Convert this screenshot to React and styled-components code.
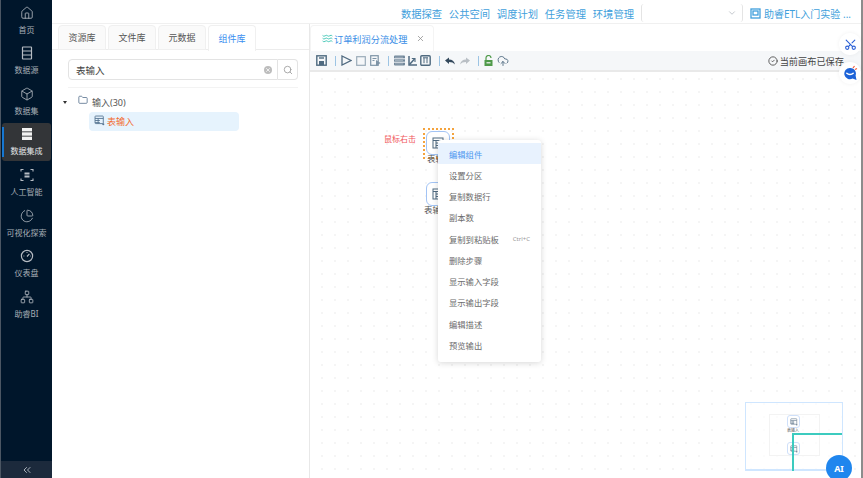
import React from 'react';
import styled, { createGlobalStyle } from 'styled-components';
import {
  Home, Box, ChartPie, Network, ChevronsLeft,
  Folder, X, Search, ChevronDown, CircleCheck, CloudUpload, Scissors, Waves,
} from 'lucide-react';

const GlobalStyle = createGlobalStyle`
  html, body { margin: 0; padding: 0; height: 100%; overflow: hidden; background: #fff; }
  body { font-family: "Noto Sans", "Noto Sans CJK SC", sans-serif; }
  #root { height: 100%; }
`;

const Page = styled.div`
  display: flex;
  width: 863px;
  height: 478px;
  overflow: hidden;
  position: relative;
`;

const Sidebar = styled.aside`
  width: 52px;
  flex: none;
  display: flex;
  flex-direction: column;
  background: #00162b;
  border-left: 1px solid #4b5663;
  box-sizing: border-box;
`;

const SideList = styled.nav`
  flex: 1;
  display: flex;
  flex-direction: column;
  gap: 2.6px;
  padding-top: 1.2px;
`;

const SideItem = styled.div`
  position: relative;
  height: 38px;
  flex: none;
  margin: 0 1px;
  display: flex;
  flex-direction: column;
  align-items: center;
  justify-content: center;
  gap: 5px;
  font-size: 8px;
  line-height: 10px;
  white-space: nowrap;
  color: ${p => (p.$active ? '#e6e8ea' : '#a7aeb6')};
  border-radius: 3px;
  background: ${p => (p.$active ? '#333538' : 'transparent')};
  svg { color: ${p => (p.$active ? '#f2f2f2' : '#b6bcc3')}; }
  ${p => p.$active && `
    &::before {
      content: '';
      position: absolute;
      left: 0;
      top: 4px;
      bottom: 4px;
      width: 2px;
      background: #1677d2;
    }
  `}
`;

const Collapse = styled.div`
  height: 17px;
  display: flex;
  align-items: center;
  justify-content: center;
  background: #1c2a3c;
  color: #aab2bb;
`;

const Main = styled.div`
  flex: 1;
  display: flex;
  flex-direction: column;
  min-width: 0;
`;

const TopBar = styled.header`
  height: 24px;
  flex: none;
  display: flex;
  align-items: center;
  justify-content: flex-end;
  box-sizing: border-box;
  padding: 3px 12px 0 0;
  background: #fff;
  border-bottom: 1px solid #f0f0f0;
`;

const TopLink = styled.span`
  font-size: 10.3px;
  color: #3f9fdc;
  margin-left: 6.8px;
  white-space: nowrap;
`;

const SelectBox = styled.div`
  width: 102px;
  height: 18px;
  margin-left: 7px;
  display: flex;
  align-items: center;
  justify-content: flex-end;
  padding-right: 5px;
  box-sizing: border-box;
  border-left: 1px solid #e4e4e4;
  border-right: 1px solid #e4e4e4;
  border-radius: 3px;
  color: #b9bec4;
`;

const Guide = styled.span`
  display: flex;
  align-items: center;
  gap: 3px;
  margin-left: 7px;
  font-size: 10px;
  color: #3f9fdc;
  white-space: nowrap;
`;

const Body = styled.div`
  flex: 1;
  display: flex;
  min-height: 0;
`;

const LeftPanel = styled.section`
  width: 258px;
  flex: none;
  display: flex;
  flex-direction: column;
  border-right: 1px solid #e8e8e8;
  box-sizing: border-box;
`;

const TabRow = styled.div`
  height: 26px;
  flex: none;
  display: flex;
  gap: 2px;
  padding: 1px 0 0 6px;
  box-sizing: border-box;
  border-bottom: 1px solid #ececec;
`;

const LibTab = styled.div`
  width: 48px;
  height: ${p => (p.$active ? '26px' : '25px')};
  display: flex;
  align-items: center;
  justify-content: center;
  font-size: 9px;
  color: ${p => (p.$active ? '#3a8ef0' : '#555')};
  background: ${p => (p.$active ? '#fff' : '#fafafa')};
  border: 1px solid #f0f0f0;
  border-bottom: ${p => (p.$active ? 'none' : '1px solid #f0f0f0')};
  border-radius: 4px 4px 0 0;
  box-sizing: border-box;
`;

const SearchRow = styled.div`
  height: 38px;
  flex: none;
  display: flex;
  align-items: center;
  margin: 0 11px 0 16px;
  border-bottom: 1px solid #f3f3f3;
  padding-top: 2px;
  box-sizing: border-box;
`;

const SearchInput = styled.div`
  width: 211px;
  height: 21px;
  display: flex;
  align-items: center;
  justify-content: space-between;
  padding: 0 5px 0 7px;
  box-sizing: border-box;
  border: 1px solid #e3e3e3;
  border-radius: 4px 0 0 4px;
  font-size: 9.5px;
  color: #444;
`;

const ClearDot = styled.span`
  width: 8px;
  height: 8px;
  border-radius: 50%;
  background: #bdbdbd;
  color: #fff;
  display: flex;
  align-items: center;
  justify-content: center;
`;

const SearchButton = styled.div`
  width: 20px;
  height: 21px;
  display: flex;
  align-items: center;
  justify-content: center;
  box-sizing: border-box;
  border: 1px solid #e3e3e3;
  border-left: none;
  border-radius: 0 4px 4px 0;
  color: #9a9a9a;
`;

const Tree = styled.div`
  padding: 5px 0 0 11px;
`;

const TreeRow = styled.div`
  display: flex;
  align-items: center;
  height: 18px;
  font-size: 9px;
  color: #555;
`;

const Caret = styled.span`
  width: 0;
  height: 0;
  border-left: 2.5px solid transparent;
  border-right: 2.5px solid transparent;
  border-top: 3px solid #333;
  margin-right: 11px;
`;

const FolderIcon = styled(Folder)`
  color: #5b7590;
  margin-right: 4px;
  margin-top: -4px;
`;

const LeafRow = styled.div`
  width: 150px;
  height: 19px;
  margin: 1px 0 0 26px;
  display: flex;
  align-items: center;
  gap: 2px;
  padding-left: 5px;
  box-sizing: border-box;
  background: #e6f3fd;
  border-radius: 4px;
  font-size: 9px;
  color: #f26a2e;
  svg { color: #557592; margin-top: -3px; }
`;

const Editor = styled.section`
  flex: 1;
  display: flex;
  flex-direction: column;
  min-width: 0;
`;

const DocTabs = styled.div`
  height: 27px;
  flex: none;
  display: flex;
  padding-top: 1px;
  box-sizing: border-box;
`;

const DocTab = styled.div`
  width: 124px;
  display: flex;
  align-items: center;
  box-sizing: border-box;
  padding-left: 11px;
  gap: 1px;
  font-size: 9.2px;
  color: #3a8ee6;
  white-space: nowrap;
  border: 1px solid #f4f4f4;
  border-bottom: none;
  border-radius: 4px 4px 0 0;
`;

const TabClose = styled(X)`
  color: #8d8d8d;
  margin-left: 7px;
`;

const Toolbar = styled.div`
  height: 19px;
  flex: none;
  display: flex;
  align-items: center;
  padding-left: 6px;
  background: #f5f7f9;
  border-bottom: 2px solid #e9e9e9;
`;

const ToolGroup = styled.div`
  display: flex;
  align-items: center;
  gap: ${p => p.$gap || 4}px;
  color: #4f6a80;
  padding-right: ${p => p.$pad || 8}px;
  margin-right: 5px;
  border-right: ${p => (p.$last ? 'none' : '1px solid #9cc4e4')};
  height: 10px;
`;

const Saved = styled.div`
  margin-left: auto;
  margin-right: 19px;
  display: flex;
  align-items: center;
  gap: 2px;
  font-size: 9.2px;
  color: #444;
  svg { color: #444; }
`;

const Canvas = styled.div`
  flex: 1;
  position: relative;
  background-color: #fff;
  background-image: radial-gradient(circle, #d8d8d8 0.6px, transparent 0.9px);
  background-size: 13px 13px;
  background-position: 5.5px 0.5px;
`;

const Hint = styled.span`
  position: absolute;
  left: 74px;
  top: 61px;
  font-size: 8px;
  color: #f0565a;
`;

const Selection = styled.div`
  position: absolute;
  left: 113px;
  top: 56px;
  width: 31px;
  height: 31px;
  border: 2px dotted #f5a33c;
  box-sizing: border-box;
`;

const Node = styled.div`
  position: absolute;
  left: ${p => p.$x}px;
  top: ${p => p.$y}px;
  width: 24px;
  height: 24px;
  box-sizing: border-box;
  border: 1px solid #a3c4f5;
  border-radius: 6px;
  background: #fff;
  display: flex;
  align-items: center;
  justify-content: center;
  color: #4f6a80;
`;

const NodeLabel = styled.span`
  position: absolute;
  left: ${p => p.$x}px;
  top: ${p => p.$y}px;
  font-size: 8.5px;
  line-height: 10px;
  color: #555;
  white-space: nowrap;
`;

const Menu = styled.ul`
  position: absolute;
  left: 128px;
  top: 68px;
  width: 103px;
  margin: 0;
  padding: 3px 0 6px;
  list-style: none;
  background: #fff;
  border-radius: 3px;
  box-shadow: 0 1px 6px rgba(0, 0, 0, 0.16);
`;

const MenuItem = styled.li`
  height: 21.25px;
  display: flex;
  align-items: center;
  justify-content: space-between;
  padding: 0 11px;
  font-size: 8.3px;
  color: ${p => (p.$active ? '#4a97ef' : '#6b6b6b')};
  background: ${p => (p.$active ? '#e8f2fe' : 'transparent')};
`;

const Shortcut = styled.span`
  font-size: 6px;
  color: #999;
`;

const MiniMap = styled.div`
  position: absolute;
  right: 20px;
  bottom: 7px;
  width: 98px;
  height: 69px;
  border: 1px solid #cfe6ff;
  border-bottom-width: 2px;
  box-sizing: border-box;
  background: rgba(255, 255, 255, 0.7);
`;

const MiniArea = styled.div`
  position: absolute;
  left: 23px;
  top: 11px;
  width: 49px;
  height: 40px;
  border: 1px solid #f3f3f3;
`;

const MiniNode = styled.div`
  position: absolute;
  left: 41px;
  top: ${p => p.$y}px;
  width: 13px;
  height: 13px;
  border: 1px solid #cfe0fa;
  border-radius: 3px;
  box-sizing: border-box;
  background: #fff;
  display: flex;
  align-items: center;
  justify-content: center;
  color: #6d8296;
`;

const MiniLabel = styled.span`
  position: absolute;
  left: 41px;
  top: 25px;
  font-size: 4px;
  line-height: 5px;
  color: #555;
`;

const ViewLineH = styled.div`
  position: absolute;
  left: 46px;
  top: 30px;
  right: 0;
  height: 2px;
  background: #3ccbbf;
`;

const ViewLineV = styled.div`
  position: absolute;
  left: 46px;
  top: 30px;
  bottom: -2px;
  width: 2px;
  background: #3ccbbf;
`;

const AiBadge = styled.div`
  position: absolute;
  right: 11px;
  bottom: -3px;
  width: 26px;
  height: 26px;
  border-radius: 50%;
  background: #1f86ee;
  color: #fff;
  display: flex;
  align-items: center;
  justify-content: center;
  font-size: 9px;
  font-weight: 700;
`;

const FloatBtn = styled.div`
  position: absolute;
  right: 2px;
  top: ${p => p.$y}px;
  width: 22px;
  height: 22px;
  border-radius: 50%;
  background: #fff;
  box-shadow: 0 0 4px rgba(0, 0, 0, 0.06);
  display: flex;
  align-items: center;
  justify-content: center;
  color: #2a5fd6;
`;

const ScissorsIcon = styled(Scissors)`
  transform: rotate(-90deg);
`;

const ScrollEdge = styled.div`
  position: absolute;
  right: 0;
  top: 0;
  bottom: 0;
  width: 2px;
  background: #8c8c8c;
`;

const TableIcon = ({ size = 12 }) => (
  <svg width={size} height={size} viewBox="0 0 16 16" fill="none" stroke="currentColor" strokeWidth="1.3">
    <rect x="1.5" y="1.5" width="12" height="11" rx="1" />
    <path d="M1.5 5h12M1.5 8h7M1.5 11h7M6 5v7.5" />
    <circle cx="13.5" cy="13.5" r="1.5" fill="currentColor" stroke="none" />
  </svg>
);

const NodeIcon = () => (
  <svg width="12" height="12" viewBox="0 0 12 12" fill="none" stroke="currentColor" strokeWidth="1">
    <rect x="1" y="1" width="10" height="10" />
    <path d="M1 3.5h10M4 3.5V11M4 6h4M4 8.5h4" />
  </svg>
);

const SourceIcon = () => (
  <svg width="14" height="14" viewBox="0 0 14 14" fill="none" stroke="currentColor" strokeWidth="1.2">
    <rect x="2.5" y="1" width="9" height="12" rx="0.5" />
    <path d="M2.5 5h9M2.5 9h9" />
  </svg>
);

const StackIcon = () => (
  <svg width="14" height="14" viewBox="0 0 14 14" fill="currentColor">
    <rect x="2" y="1" width="10" height="3.4" />
    <rect x="2" y="5.3" width="10" height="3.4" />
    <rect x="2" y="9.6" width="10" height="3.4" />
  </svg>
);

const ScanIcon = () => (
  <svg width="14" height="14" viewBox="0 0 14 14" fill="none" stroke="currentColor" strokeWidth="1.1">
    <path d="M1 3.5V1.5h2.5M10.5 1.5H13v2M13 10.5v2h-2.5M3.5 12.5H1v-2" />
    <rect x="4.5" y="4.5" width="5" height="2" fill="currentColor" stroke="none" />
    <rect x="4.5" y="7.5" width="5" height="2" fill="currentColor" stroke="none" />
  </svg>
);

const GaugeIcon = () => (
  <svg width="14" height="14" viewBox="0 0 14 14" fill="none" stroke="currentColor" strokeWidth="1.2">
    <circle cx="7" cy="7" r="5.6" />
    <path d="M7 7.5l2.4-2.6M3.5 7h.8M10 7h.6M7 3.2v.8" />
  </svg>
);

const SaveIcon = () => (
  <svg width="11" height="11" viewBox="0 0 11 11" fill="none" stroke="currentColor" strokeWidth="1.4">
    <rect x="0.8" y="0.8" width="9.4" height="9.4" />
    <rect x="3" y="6" width="5" height="4" fill="currentColor" stroke="none" />
    <path d="M3 3h5" />
  </svg>
);

const PlayIcon = () => (
  <svg width="11" height="11" viewBox="0 0 11 11" fill="none" stroke="currentColor" strokeWidth="1.3">
    <path d="M1 1l9 4.5L1 10z" />
  </svg>
);

const StopIcon = () => (
  <svg width="10" height="10" viewBox="0 0 10 10" fill="none" stroke="#9aaab8" strokeWidth="1.2">
    <rect x="0.7" y="0.7" width="8.6" height="8.6" />
  </svg>
);

const RunStepIcon = () => (
  <svg width="11" height="11" viewBox="0 0 11 11" fill="none" stroke="#7d93a6" strokeWidth="1.2">
    <rect x="0.7" y="0.7" width="7.5" height="9.6" />
    <path d="M2.5 3.5h4M2.5 5.5h2" />
    <path d="M6 5l4.5 3L6 11z" fill="#7d93a6" stroke="none" />
  </svg>
);

const GridIcon = () => (
  <svg width="11" height="11" viewBox="0 0 11 11" fill="none">
    <rect x="0" y="0.5" width="11" height="10" rx="1" fill="#71879a" />
    <path d="M0 3.8h11M0 7.2h11" stroke="#f5f7f9" />
    <path d="M1.5 2.2h8M1.5 5.5h8M1.5 8.9h8" stroke="#f5f7f9" strokeDasharray="1 1" strokeWidth="0.7" />
  </svg>
);

const AxisIcon = () => (
  <svg width="9" height="11" viewBox="0 0 9 11" fill="none" stroke="#4f6a80" strokeWidth="1.5">
    <path d="M1 1v9h8" />
    <path d="M1.5 9.5l5-5.5" />
    <path d="M3.8 3.5h3.2V7" strokeWidth="1.1" />
  </svg>
);

const ColumnsIcon = () => (
  <svg width="11" height="11" viewBox="0 0 11 11" fill="none" stroke="#4f6a80" strokeWidth="1.4">
    <rect x="0.8" y="0.8" width="9.4" height="9.4" rx="1" />
    <path d="M3 2.8h5M4 2.8v5.4M7 2.8v5.4" strokeWidth="1" />
  </svg>
);

const UndoIcon = () => (
  <svg width="10" height="10" viewBox="0 0 10 10" fill="#33485c">
    <path d="M0 4.5L4 1.5V3.6C7.2 3.6 9.2 5.2 10 8.5 8.6 6.8 6.8 6 4 6V8z" />
  </svg>
);

const RedoIcon = () => (
  <svg width="10" height="10" viewBox="0 0 10 10" fill="#b9bfc5">
    <path d="M10 4.5L6 1.5V3.6C2.8 3.6.8 5.2 0 8.5 1.4 6.8 3.2 6 6 6V8z" />
  </svg>
);

const LockIcon = () => (
  <svg width="9" height="11" viewBox="0 0 9 11" fill="none">
    <path d="M2 5V3a2.5 2.5 0 0 1 5 0" stroke="#4f9a4a" strokeWidth="1.2" />
    <rect x="0.5" y="5" width="8" height="6" fill="#4f9a4a" />
    <rect x="2.5" y="7.2" width="4" height="1.2" fill="#f5f7f9" />
  </svg>
);

const GuideIcon = () => (
  <svg width="11" height="11" viewBox="0 0 11 11" fill="none" stroke="#3f9fdc" strokeWidth="1.3">
    <rect x="1" y="1" width="9" height="9" />
    <rect x="3" y="3" width="5" height="4" />
  </svg>
);

const ChatBubble = () => (
  <svg width="15" height="16" viewBox="0 0 15 16">
    <path d="M7 3a5.6 5.6 0 1 0 2.6 10.5L13.5 15 12.6 10.5A5.6 5.6 0 0 0 7 3z" fill="#1d63d8" />
    <path d="M3.8 8.2c1.6 1.6 4.8 1.6 6.4 0" stroke="#fff" strokeWidth="1.5" strokeLinecap="round" fill="none" />
    <path d="M10 3l1.5-2M12 4.5l2-1" stroke="#ef5a3c" strokeWidth="1.2" />
  </svg>
);

const sideItems = [
  { label: '首页', icon: <Home size={14} strokeWidth={1.4} /> },
  { label: '数据源', icon: <SourceIcon /> },
  { label: '数据集', icon: <Box size={14} strokeWidth={1.4} /> },
  { label: '数据集成', icon: <StackIcon />, active: true },
  { label: '人工智能', icon: <ScanIcon /> },
  { label: '可视化探索', icon: <ChartPie size={14} strokeWidth={1.4} /> },
  { label: '仪表盘', icon: <GaugeIcon /> },
  { label: '助睿BI', icon: <Network size={14} strokeWidth={1.4} /> },
];

const topLinks = ['数据探查', '公共空间', '调度计划', '任务管理', '环境管理'];
const libTabs = ['资源库', '文件库', '元数据', '组件库'];
const menuItems = [
  '编辑组件', '设置分区', '复制数据行', '副本数', '复制到粘贴板',
  '删除步骤', '显示输入字段', '显示输出字段', '编辑描述', '预览输出',
];

const App = () => (
  <Page>
    <GlobalStyle />
    <Sidebar>
      <SideList>
        {sideItems.map(({ label, icon, active }) => (
          <SideItem key={label} $active={active}>
            {icon}
            {label}
          </SideItem>
        ))}
      </SideList>
      <Collapse><ChevronsLeft size={12} /></Collapse>
    </Sidebar>
    <Main>
      <TopBar>
        {topLinks.map(t => <TopLink key={t}>{t}</TopLink>)}
        <SelectBox><ChevronDown size={10} /></SelectBox>
        <Guide><GuideIcon />助睿ETL入门实验 ...</Guide>
      </TopBar>
      <Body>
        <LeftPanel>
          <TabRow>
            {libTabs.map((t, i) => <LibTab key={t} $active={i === 3}>{t}</LibTab>)}
          </TabRow>
          <SearchRow>
            <SearchInput>
              表输入
              <ClearDot><X size={6} strokeWidth={3} /></ClearDot>
            </SearchInput>
            <SearchButton><Search size={10} /></SearchButton>
          </SearchRow>
          <Tree>
            <TreeRow>
              <Caret />
              <FolderIcon size={10} />
              输入(30)
            </TreeRow>
            <LeafRow>
              <TableIcon size={11} />
              表输入
            </LeafRow>
          </Tree>
        </LeftPanel>
        <Editor>
          <DocTabs>
            <DocTab>
              <Waves size={11} color="#35c2b0" />
              订单利润分流处理
              <TabClose size={9} />
            </DocTab>
          </DocTabs>
          <Toolbar>
            <ToolGroup $pad={8}><SaveIcon /></ToolGroup>
            <ToolGroup $pad={7}>
              <PlayIcon />
              <StopIcon />
              <RunStepIcon />
            </ToolGroup>
            <ToolGroup $pad={8} $gap={3}>
              <GridIcon />
              <AxisIcon />
              <ColumnsIcon />
            </ToolGroup>
            <ToolGroup $pad={8} $gap={5}>
              <UndoIcon />
              <RedoIcon />
            </ToolGroup>
            <ToolGroup $last $gap={4}>
              <LockIcon />
              <CloudUpload size={12} strokeWidth={1.8} />
            </ToolGroup>
            <Saved><CircleCheck size={10} />当前画布已保存</Saved>
          </Toolbar>
          <Canvas>
            <Hint>鼠标右击</Hint>
            <Selection />
            <Node $x={116} $y={59}><NodeIcon /></Node>
            <NodeLabel $x={117} $y={82}>表输入</NodeLabel>
            <Node $x={116} $y={110}><NodeIcon /></Node>
            <NodeLabel $x={114} $y={133}>表输入</NodeLabel>
            <Menu>
              {menuItems.map((m, i) => (
                <MenuItem key={m} $active={i === 0}>
                  {m}
                  {m === '复制到粘贴板' && <Shortcut>Ctrl+C</Shortcut>}
                </MenuItem>
              ))}
            </Menu>
            <MiniMap>
              <MiniArea />
              <MiniNode $y={12}><TableIcon size={8} /></MiniNode>
              <MiniLabel>表输入</MiniLabel>
              <MiniNode $y={39}><TableIcon size={8} /></MiniNode>
              <ViewLineH />
              <ViewLineV />
            </MiniMap>
            <AiBadge>AI</AiBadge>
          </Canvas>
        </Editor>
      </Body>
    </Main>
    <ScrollEdge />
    <FloatBtn $y={33}><ScissorsIcon size={13} strokeWidth={2} /></FloatBtn>
    <FloatBtn $y={62}><ChatBubble /></FloatBtn>
  </Page>
);

export default App;
